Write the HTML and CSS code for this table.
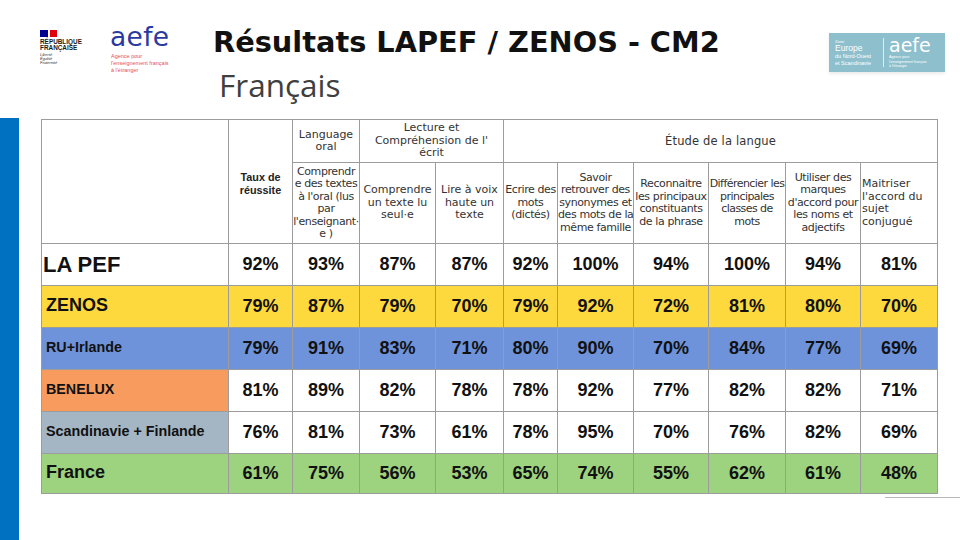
FILE: index.html
```html
<!DOCTYPE html>
<html lang="fr">
<head>
<meta charset="utf-8">
<title>Résultats LAPEF / ZENOS - CM2</title>
<link rel="stylesheet" href="styles.css">
</head>
<body>
<header class="top">
  <div class="rf">
    <div class="rf-flag"><span class="rf-blue"></span><span class="rf-red"></span></div>
    <div class="rf-name">RÉPUBLIQUE<br>FRANÇAISE</div>
    <div class="rf-motto">Liberté<br>Égalité<br>Fraternité</div>
  </div>
  <div class="aefe">
    <div class="aefe-word">aefe</div>
    <div class="aefe-sub">Agence pour<br>l'enseignement français<br>à l'étranger</div>
  </div>
  <div class="titles">
    <h1 class="title">Résultats LAPEF / ZENOS - CM2</h1>
    <h2 class="subtitle">Français</h2>
  </div>
  <div class="zone">
    <div class="zone-left">
      <span class="z-small">Zone</span>
      <span class="z-big">Europe</span>
      <span class="z-mid">du Nord-Ouest</span>
      <span class="z-mid">et Scandinavie</span>
    </div>
    <div class="zone-sep"></div>
    <div class="zone-right">
      <span class="z-aefe">aefe</span>
      <span class="z-tiny">Agence pour<br>l'enseignement français<br>à l'étranger</span>
    </div>
  </div>
</header>

<main class="main">
  <div class="bar"></div>
  <div class="content">
    <table class="results">
      <colgroup>
        <col style="width:187px"><col style="width:64px"><col style="width:67px"><col style="width:76px"><col style="width:68px"><col style="width:54px"><col style="width:76px"><col style="width:75px"><col style="width:77px"><col style="width:75px"><col style="width:77px">
      </colgroup>
      <tr class="hrow1">
        <td rowspan="2"></td>
        <td rowspan="2" class="taux">Taux de<br>réussite</td>
        <td class="hd">Language<br>oral</td>
        <td class="hd" colspan="2">Lecture et<br>Compréhension de l'<br>écrit</td>
        <td class="hd big" colspan="6">Étude de la langue</td>
      </tr>
      <tr class="hrow2">
        <td class="hd tight">Comprendr<br>e des textes<br>à l'oral (lus<br>par<br>l'enseignant·<br>e )</td>
        <td class="hd">Comprendre<br>un texte lu<br>seul·e</td>
        <td class="hd">Lire à voix<br>haute un<br>texte</td>
        <td class="hd tight">Ecrire des<br>mots<br>(dictés)</td>
        <td class="hd tight">Savoir<br>retrouver des<br>synonymes et<br>des mots de la<br>même famille</td>
        <td class="hd tight">Reconnaitre<br>les principaux<br>constituants<br>de la phrase</td>
        <td class="hd tighter">Différencier les<br>principales<br>classes de<br>mots</td>
        <td class="hd tight">Utiliser des<br>marques<br>d'accord pour<br>les noms et<br>adjectifs</td>
        <td class="hd left">Maitriser<br>l'accord du<br>sujet<br>conjugué</td>
      </tr>
      <tr class="row">
        <td class="lbl lbl-pef">LA PEF</td>
        <td>92%</td><td>93%</td><td>87%</td><td>87%</td><td>92%</td><td>100%</td><td>94%</td><td>100%</td><td>94%</td><td>81%</td>
      </tr>
      <tr class="row yellow">
        <td class="lbl lbl-18">ZENOS</td>
        <td>79%</td><td>87%</td><td>79%</td><td>70%</td><td>79%</td><td>92%</td><td>72%</td><td>81%</td><td>80%</td><td>70%</td>
      </tr>
      <tr class="row blue">
        <td class="lbl lbl-14">RU+Irlande</td>
        <td>79%</td><td>91%</td><td>83%</td><td>71%</td><td>80%</td><td>90%</td><td>70%</td><td>84%</td><td>77%</td><td>69%</td>
      </tr>
      <tr class="row">
        <td class="lbl lbl-14 orange">BENELUX</td>
        <td>81%</td><td>89%</td><td>82%</td><td>78%</td><td>78%</td><td>92%</td><td>77%</td><td>82%</td><td>82%</td><td>71%</td>
      </tr>
      <tr class="row">
        <td class="lbl lbl-14 grey">Scandinavie + Finlande</td>
        <td>76%</td><td>81%</td><td>73%</td><td>61%</td><td>78%</td><td>95%</td><td>70%</td><td>76%</td><td>82%</td><td>69%</td>
      </tr>
      <tr class="row last green">
        <td class="lbl lbl-18">France</td>
        <td>61%</td><td>75%</td><td>56%</td><td>53%</td><td>65%</td><td>74%</td><td>55%</td><td>62%</td><td>61%</td><td>48%</td>
      </tr>
    </table>
    <div class="rule"></div>
  </div>
</main>
</body>
</html>
```

FILE: styles.css
```css
* { box-sizing: border-box; }

body {
  margin: 0;
  width: 960px;
  height: 540px;
  overflow: hidden;
  background: #ffffff;
  font-family: "Liberation Sans", Arial, sans-serif;
  color: #111;
}

/* ---------- header ---------- */
.top {
  display: flex;
  align-items: flex-start;
  height: 118px;
  padding-left: 40px;
}

.rf {
  margin-top: 30px;
  width: 44px;
}
.rf-flag {
  display: flex;
  gap: 2px;
  height: 7px;
  width: 17px;
}
.rf-blue { flex: 1; background: #000091; }
.rf-red { flex: 1; background: #e1000f; }
.rf-name {
  margin-top: 2px;
  font-weight: bold;
  font-size: 6.4px;
  line-height: 6px;
  color: #1a1a1a;
}
.rf-motto {
  margin-top: 2px;
  font-style: italic;
  font-size: 4px;
  line-height: 4px;
  color: #333;
}

.aefe {
  margin-top: 24px;
  margin-left: 26px;
  width: 64px;
}
.aefe-word {
  font-family: "DejaVu Sans", sans-serif;
  font-size: 26.5px;
  line-height: 26.5px;
  color: #2b3aa0;
  letter-spacing: 0.3px;
}
.aefe-sub {
  margin-top: 2px;
  margin-left: 1px;
  font-size: 5.5px;
  line-height: 7px;
  color: #e4505a;
  white-space: nowrap;
}

.titles {
  margin-left: 39px;
  margin-top: 25px;
}
.title {
  margin: 0;
  font-family: "DejaVu Sans", sans-serif;
  font-weight: bold;
  font-size: 28.8px;
  line-height: 35px;
  color: #111;
  white-space: nowrap;
}
.subtitle {
  margin: 6px 0 0 6px;
  font-family: "Open Sans", sans-serif;
  font-weight: normal;
  font-size: 31.5px;
  line-height: 37px;
  color: #3f3f3f;
}

.zone {
  margin-left: auto;
  margin-right: 15px;
  margin-top: 33px;
  width: 116px;
  height: 39px;
  background: #8ebfcd;
  display: flex;
  align-items: stretch;
  padding: 3px 4px 3px 6px;
  color: #fff;
  box-shadow: 0 2px 3px rgba(0,0,0,0.08);
}
.zone-left {
  display: flex;
  flex-direction: column;
  justify-content: center;
  width: 44px;
}
.z-small { font-size: 4px; line-height: 5px; }
.z-big { font-size: 8.5px; line-height: 9px; }
.z-mid { font-size: 5.5px; line-height: 6.5px; white-space: nowrap; }
.zone-sep {
  width: 1px;
  background: rgba(255,255,255,0.7);
  margin: 2px 5px 2px 4px;
}
.zone-right {
  display: flex;
  flex-direction: column;
}
.z-aefe {
  font-family: "DejaVu Sans", sans-serif;
  font-size: 19px;
  line-height: 18px;
}
.z-tiny {
  margin-top: 1px;
  font-size: 3.6px;
  line-height: 4.5px;
  white-space: nowrap;
}

/* ---------- main ---------- */
.main {
  display: flex;
  align-items: flex-start;
}
.bar {
  width: 19px;
  height: 422px;
  background: #0070c0;
}
.content {
  width: 919px;
  margin-left: 22px;
  padding-top: 1px;
  display: flex;
  flex-direction: column;
}

.results {
  border-collapse: collapse;
  table-layout: fixed;
  width: 896px;
}
.results td {
  border: 1px solid #9c9c9c;
  padding: 0;
  text-align: center;
  vertical-align: middle;
}

.hrow1 { height: 43px; }
.hrow2 { height: 81px; }

.hd {
  font-family: "DejaVu Sans", sans-serif;
  font-size: 11px;
  line-height: 12.5px;
  color: #333;
  white-space: nowrap;
  overflow: hidden;
}
.hd.tight { letter-spacing: -0.4px; }
.hd.tighter { letter-spacing: -0.55px; }
.hd.big { font-size: 11.5px; letter-spacing: 0.15px; }
.hd.left { text-align: left; padding-left: 1px; }

.taux {
  font-weight: bold;
  font-size: 10.8px;
  line-height: 13px;
  color: #222;
  padding-top: 4px !important;
}

.row { height: 42px; }
.row.last { height: 40px; }
.row td {
  font-weight: bold;
  font-size: 18px;
  color: #111;
}
.row td.lbl {
  text-align: left;
  padding-left: 4px;
  padding-bottom: 3px;
  color: #111;
}
.row td.lbl-pef { font-size: 22px; padding-left: 1px; padding-bottom: 0; }
.row td.lbl-18 { font-size: 18px; }
.row td.lbl-14 { font-size: 14.3px; }

.yellow { background: #fed93d; }
.blue { background: #6e93da; }
.green { background: #9dd27e; }
.orange { background: #f89b5e; }
.grey { background: #a4b5c3; }

.rule {
  align-self: flex-end;
  width: 75px;
  height: 1px;
  margin-top: 3px;
  background: #b8b8b8;
}
```
